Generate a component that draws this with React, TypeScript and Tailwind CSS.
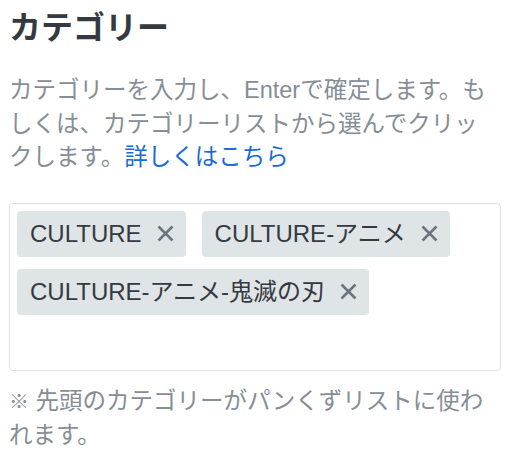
import React from "react";

const font = { fontFamily: '"Liberation Sans", "Noto Sans CJK JP", sans-serif' };

function XIcon() {
  return (
    <svg width="17" height="17" viewBox="0 0 17 17" className="shrink-0">
      <path d="M1.5 1.5 L15.5 15.5 M15.5 1.5 L1.5 15.5" stroke="#6c757d" strokeWidth="2.6" fill="none" />
    </svg>
  );
}

function Chip({ label }: { label: string }) {
  return (
    <div className="flex h-[46px] items-center gap-[15px] rounded-[4px] bg-[#dfe4e7] pl-[13px] pr-[12px] text-[24px] leading-none text-[#343a40]">
      <span>{label}</span>
      <XIcon />
    </div>
  );
}

export default function App() {
  return (
    <div className="min-h-[466px] w-[514px] bg-white pl-[9px] pr-[13px] pt-[8px]" style={font}>
      <h1 className="text-[32px] font-bold leading-[40px] text-[#343a40]">カテゴリー</h1>
      <p className="mt-[26px] text-[23.5px] leading-[33.5px] text-[#868e96]">
        カテゴリーを入力し、Enterで確定します。も
        <br />
        しくは、カテゴリーリストから選んでクリッ
        <br />
        クします。<a className="text-[#1a6ad8]">詳しくはこちら</a>
      </p>
      <div className="mt-[28px] flex h-[168px] flex-wrap content-start gap-x-[16px] gap-y-[12px] rounded-[4px] border border-[#dee2e6] p-[7px]">
        <Chip label="CULTURE" />
        <Chip label="CULTURE-アニメ" />
        <Chip label="CULTURE-アニメ-鬼滅の刃" />
      </div>
      <p className="mt-[14px] text-[23.5px] leading-[33.5px] text-[#868e96]">
        <span className="text-[20px] font-bold">※</span> 先頭のカテゴリーがパンくずリストに使わ
        <br />
        れます。
      </p>
    </div>
  );
}
